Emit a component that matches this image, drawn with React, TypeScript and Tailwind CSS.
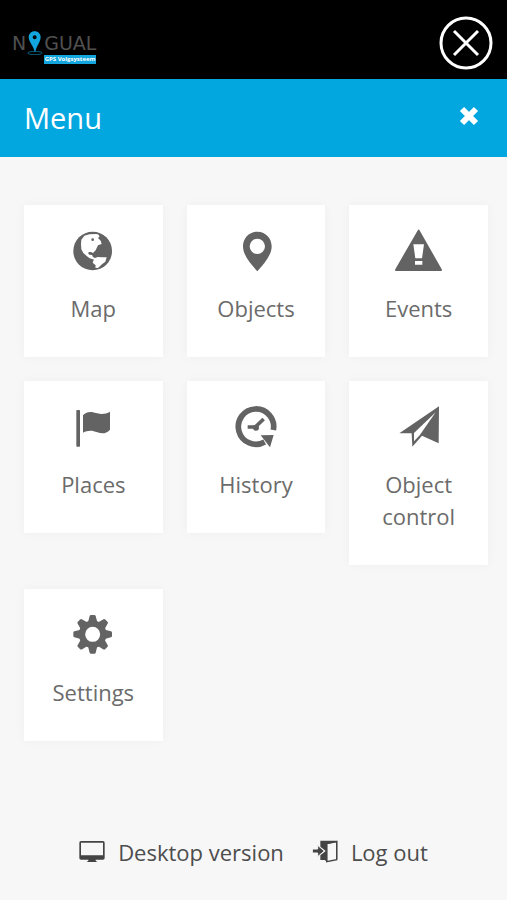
import type { ReactNode } from 'react';

interface MenuItem {
  label: string;
  icon: ReactNode;
}

const gearTeeth = [0, 45, 90, 135, 180, 225, 270, 315];

const menuItems: MenuItem[] = [
  {
    label: 'Map',
    icon: (
      <>
        <circle cx="71" cy="72" r="58" fill="currentColor" />
        <path
          d="M37 38 L46 26 L61 22 L83 21 Q92 23 91 29 L87 33 L95 41 L98 51 L87 55 L83 63 L80 70 L72 78 L66 75 L59 75 L58 80 L61 83 L69 84 L72 90 L79 94 L76 98 L62 94 L53 87 L43 78 L37 67 L36 52 Z"
          fill="#fff"
        />
        <path d="M76 94 L86 90 L98 91 L113 91 L109 104 L99 112 L87 123 L79 122 L80 115 L71 107 Z" fill="#fff" />
        <circle cx="71" cy="38" r="4" fill="currentColor" />
      </>
    ),
  },
  {
    label: 'Objects',
    icon: (
      <path
        fill="currentColor"
        fillRule="evenodd"
        d="M76 14 C100 14 119 33 119 58 C119 84 98 108 76 133 C54 108 33 84 33 58 C33 33 52 14 76 14 Z M76 35 A23 23 0 1 0 76 81 A23 23 0 1 0 76 35 Z"
      />
    ),
  },
  {
    label: 'Events',
    icon: (
      <>
        <path d="M71 11 L138 129 L3 129 Z" fill="currentColor" stroke="currentColor" strokeWidth="6" strokeLinejoin="round" />
        <path d="M55 52 H87 L81 94 H61 Z M60 102 H82 V113 H60 Z" fill="#fff" />
      </>
    ),
  },
  {
    label: 'Places',
    icon: (
      <path
        fill="currentColor"
        d="M22 23 Q22 21 24 21 H31 Q33 21 33 23 V129 Q33 131 31 131 H24 Q22 131 22 129 Z M42 37 C55 22 71 27 85 31 C99 35 112 32 123 26 V80 C111 93 99 93 85 88 C69 81 56 82 42 89 Z"
      />
    ),
  },
  {
    label: 'History',
    icon: (
      <>
        <path d="M124 81 A53 53 0 1 0 98 117" fill="none" stroke="currentColor" strokeWidth="17" />
        <path d="M86 97 L125 96 L114 133 Z" fill="currentColor" />
        <path d="M47 72 H70 L95 48" fill="none" stroke="currentColor" strokeWidth="11" />
        <circle cx="72" cy="74" r="9" fill="currentColor" />
      </>
    ),
  },
  {
    label: 'Object control',
    icon: (
      <>
        <path d="M132 10 L13 91 L50 91 L52 131 L81 98 L131 121 Z" fill="currentColor" />
        <path d="M122 28 L57 90 V115 L74 97 Z" fill="#fff" />
      </>
    ),
  },
  {
    label: 'Settings',
    icon: (
      <>
        <circle cx="71" cy="70" r="32" fill="none" stroke="currentColor" strokeWidth="19" />
        {gearTeeth.map((angle) => (
          <path
            key={angle}
            d="M57 34 L62 15 Q63 12 66 12 H76 Q79 12 80 15 L85 34 Z"
            fill="currentColor"
            transform={`rotate(${angle} 71 70)`}
          />
        ))}
      </>
    ),
  },
];

function Logo() {
  return (
    <a href="#" className="flex flex-col pt-2 text-[#505050]">
      <span className="flex items-end font-['DejaVu_Sans'] text-[19px] leading-6">
        N
        <svg viewBox="84 54 48 72" className="mx-px h-6 w-4" aria-hidden="true">
          <ellipse cx="108" cy="120" rx="22" ry="5" fill="none" stroke="#0b86b5" strokeWidth="2" />
          <path
            fill="#12a5de"
            fillRule="evenodd"
            d="M107 55 C118 55 125 63 125 73 C125 86 113 98 108 119 C103 98 89 86 89 73 C89 63 96 55 107 55 Z M107 67 A6 6 0 1 0 107 79 A6 6 0 1 0 107 67 Z"
          />
        </svg>
        GUAL
      </span>
      <span className="self-end bg-[#12a5de] px-px text-[6px] leading-[9px] font-bold text-white">GPS Volgsysteem</span>
    </a>
  );
}

function MenuTile({ label, icon }: MenuItem) {
  return (
    <a
      href="#"
      className="flex flex-col items-center bg-white px-4 pt-[22px] pb-[33px] text-center text-[22px] leading-8 text-[#6b6b6b] shadow-[0_0_10px_rgba(0,0,0,0.04)]"
    >
      <svg viewBox="0 0 144 144" className="mb-[17px] size-12 text-[#636363]" aria-hidden="true">
        {icon}
      </svg>
      {label}
    </a>
  );
}

export default function App() {
  return (
    <div className="flex min-h-screen flex-col bg-[#f7f7f7] font-['Open_Sans',sans-serif]">
      <header className="flex items-center justify-between bg-black pt-4 pr-[14px] pb-[9px] pl-3">
        <Logo />
        <button type="button" aria-label="Close" className="text-white">
          <svg viewBox="0 0 54 54" className="size-[54px]" fill="none" stroke="currentColor" strokeWidth="3">
            <circle cx="27" cy="27" r="25" />
            <path d="M15 15 L39 39 M39 15 L15 39" />
          </svg>
        </button>
      </header>

      <div className="flex h-[78px] items-center justify-between bg-[#02a7e0] pr-7 pl-6 text-white">
        <h1 className="text-[29px]">Menu</h1>
        <button type="button" aria-label="Close menu">
          <svg viewBox="0 0 20 20" className="mb-1 size-5" fill="none" stroke="currentColor" strokeWidth="6" strokeLinejoin="round">
            <path d="M3 3 L17 17 M17 3 L3 17" />
          </svg>
        </button>
      </div>

      <nav className="grid grid-cols-3 items-start gap-6 pt-12 pr-[19px] pl-6">
        {menuItems.map((item) => (
          <MenuTile key={item.label} label={item.label} icon={item.icon} />
        ))}
      </nav>

      <footer className="mt-auto flex justify-center gap-7 pt-8 pb-8 text-[22px] leading-8 text-[#4d4d4d]">
        <a href="#" className="flex items-center gap-[13px]">
          <svg viewBox="0 0 78 72" className="h-6 w-[26px]" aria-hidden="true">
            <path
              fill="#444"
              fillRule="evenodd"
              d="M6 3 H72 Q77 3 77 8 V54 Q77 59 72 59 H50 V62 L55 66 H23 L28 62 V59 H6 Q1 59 1 54 V8 Q1 3 6 3 Z M6 8 V46 H72 V8 Z"
            />
          </svg>
          Desktop version
        </a>
        <a href="#" className="flex items-center gap-[13px]">
          <svg viewBox="0 0 78 72" className="h-6 w-[26px]" aria-hidden="true">
            <path fill="#444" d="M25 2 H76 V58 L72 60 V7 L46 12 V66 L38 60 H25 V46 L41 33 L25 20 Z" />
            <path fill="none" stroke="#444" strokeWidth="4" d="M44 11 L74 5 V59 L44 65 Z" />
            <path fill="#444" stroke="#f7f7f7" strokeWidth="3" d="M1 27 H17 V16 L37 33 L17 50 V39 H1 Z" />
          </svg>
          Log out
        </a>
      </footer>
    </div>
  );
}
